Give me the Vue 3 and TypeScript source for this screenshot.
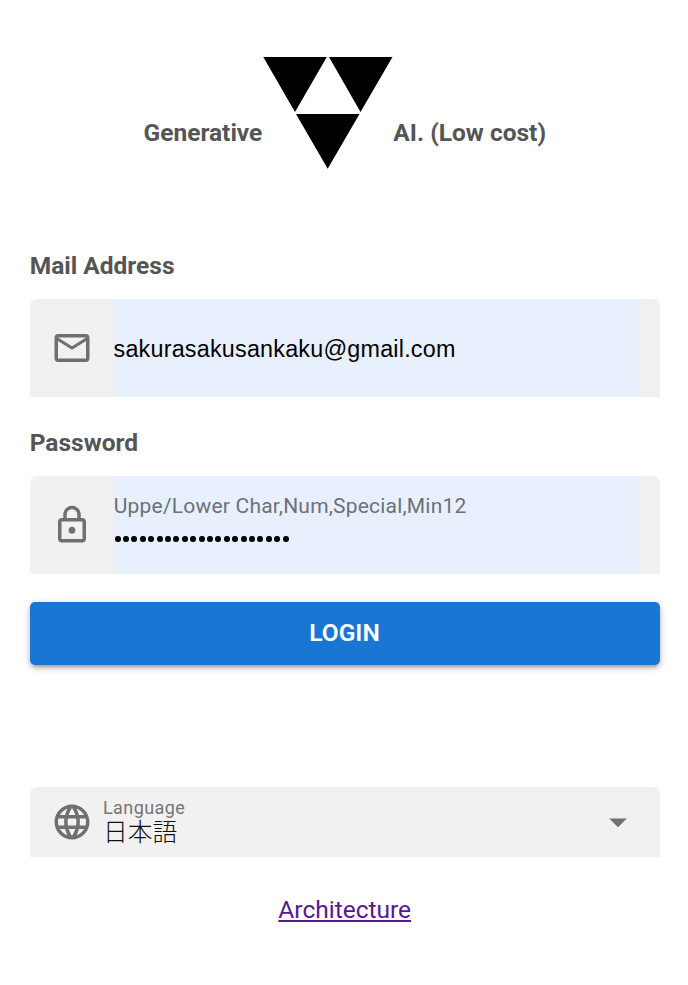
<script setup lang="ts">
import { ref } from 'vue'

const mail = ref<string>('sakurasakusankaku@gmail.com')
const passwordLength = 21
const language = ref<string>('日本語')
</script>

<template>
  <main class="page">
    <header class="brand">
      <span class="brand-text">Generative</span>
      <svg class="logo" viewBox="0 0 131 113" aria-hidden="true">
        <path d="M1.300 1h63.500L33 56ZM67 1h63.500L98.500 56ZM34 58h63.500L65.700 112.800Z" />
      </svg>
      <span class="brand-text">AI. (Low cost)</span>
    </header>

    <h2 class="title">Mail Address</h2>
    <div class="field">
      <svg class="icon" viewBox="0 0 24 24"><path d="M22 6c0-1.100-.9-2-2-2H4c-1.100 0-2 .9-2 2v12c0 1.100.9 2 2 2h16c1.100 0 2-.9 2-2V6zm-2 0l-8 5-8-5h16zm0 12H4V8l8 5 8-5v10z" /></svg>
      <div class="control mail"><span class="mail-value">{{ mail }}</span></div>
    </div>

    <h2 class="title second">Password</h2>
    <div class="field">
      <svg class="icon" viewBox="0 0 24 24"><path d="M18 8h-1V6c0-2.760-2.240-5-5-5S7 3.240 7 6v2H6c-1.100 0-2 .9-2 2v10c0 1.100.9 2 2 2h12c1.100 0 2-.9 2-2V10c0-1.100-.9-2-2-2zM9 6c0-1.660 1.340-3 3-3s3 1.340 3 3v2H9V6zm9 14H6V10h12v10zm-6-3c1.100 0 2-.9 2-2s-.9-2-2-2-2 .9-2 2 .9 2 2 2z" /></svg>
      <div class="control password">
        <span class="hint">Uppe/Lower Char,Num,Special,Min12</span>
        <span class="dots"><i v-for="n in passwordLength" :key="n" class="dot"></i></span>
      </div>
    </div>

    <button class="login" type="button">LOGIN</button>

    <div class="field select">
      <svg class="icon" viewBox="0 0 24 24"><path d="M11.990 2C6.470 2 2 6.480 2 12s4.470 10 9.990 10C17.520 22 22 17.520 22 12S17.520 2 11.990 2zm6.930 6h-2.950c-.32-1.250-.78-2.450-1.380-3.560 1.840.63 3.370 1.910 4.330 3.560zM12 4.040c.83 1.200 1.480 2.530 1.910 3.960h-3.820c.43-1.430 1.080-2.760 1.910-3.960zM4.260 14C4.100 13.360 4 12.690 4 12s.1-1.360.26-2h3.380c-.08.66-.14 1.320-.14 2s.06 1.340.14 2H4.260zm.82 2h2.950c.32 1.250.78 2.450 1.380 3.560-1.840-.63-3.370-1.900-4.330-3.560zm2.950-8H5.080c.96-1.660 2.490-2.930 4.330-3.560C8.810 5.550 8.350 6.750 8.030 8zM12 19.960c-.83-1.200-1.480-2.530-1.910-3.960h3.820c-.43 1.430-1.080 2.760-1.910 3.960zM14.340 14H9.660c-.09-.66-.16-1.320-.16-2s.07-1.350.16-2h4.680c.09.65.16 1.320.16 2s-.07 1.340-.16 2zm.25 5.560c.6-1.110 1.060-2.310 1.380-3.560h2.950c-.96 1.650-2.490 2.930-4.330 3.560zM16.360 14c.08-.66.14-1.320.14-2s-.06-1.340-.14-2h3.380c.16.64.26 1.310.26 2s-.1 1.360-.26 2h-3.380z" /></svg>
      <div class="language">
        <span class="language-label">Language</span>
        <span class="language-value">{{ language }}</span>
      </div>
      <svg class="icon arrow" viewBox="0 0 24 24"><path d="M7 10l5 5 5-5z" /></svg>
    </div>

    <a class="link" href="#">Architecture</a>
  </main>
</template>

<style>
body {
  margin: 0;
  background: #fff;
}
</style>

<style scoped>
.page {
  box-sizing: border-box;
  width: 688px;
  height: 985px;
  padding: 56px 28.5px 0 30px;
  display: flex;
  flex-direction: column;
  font-family: Roboto, "Noto Sans CJK JP", sans-serif;
  font-size: 24.5px;
  color: #000;
  overflow: hidden;
}
.brand {
  display: flex;
  justify-content: center;
  height: 113px;
}
.brand-text {
  padding-top: 58px;
  line-height: 37px;
  font-weight: 700;
  color: #555;
  white-space: nowrap;
}
.logo {
  width: 131px;
  height: 113px;
  flex: none;
}
.title {
  margin: 78px 0 15px -0.3px;
  font-size: 24.5px;
  line-height: 37px;
  font-weight: 700;
  color: #555;
}
.title.second {
  margin-top: 27px;
}
.field {
  box-sizing: border-box;
  width: 630px;
  height: 98px;
  flex: none;
  display: flex;
  align-items: center;
  padding: 0 21px;
  background: #f1f1f1;
  border-radius: 7px 7px 0 0;
}
.icon {
  width: 42px;
  height: 42px;
  flex: none;
  margin-left: -0.5px;
  fill: #707070;
}
.control {
  box-sizing: border-box;
  height: 98px;
  flex: 1;
  margin-left: 21px;
  background: #e8f0fe;
}
.mail {
  display: flex;
  align-items: center;
  padding-top: 3px;
}
.mail-value {
  font-family: "Liberation Sans", Arial, sans-serif;
  font-size: 23.33px;
  letter-spacing: 0.22px;
}
.password {
  display: flex;
  flex-direction: column;
}
.hint {
  margin: 17px 0 0 0.3px;
  line-height: 26px;
  font-size: 21px;
  letter-spacing: 0.2px;
  color: #6d7178;
  white-space: nowrap;
}
.dots {
  display: flex;
  gap: 2.420px;
  margin: 16.500px 0 0 1px;
}
.dot {
  width: 6px;
  height: 6.500px;
  border-radius: 50%;
  background: #000;
}
.login {
  height: 63px;
  flex: none;
  width: 630px;
  margin: 28px 0 122px;
  padding: 0 1px 2px 0;
  border: 0;
  border-radius: 5px;
  background: #1976d2;
  color: #fff;
  font: 600 24.5px Roboto, sans-serif;
  box-shadow: 0 2px 9px rgba(0, 0, 0, 0.2), 0 3px 4px rgba(0, 0, 0, 0.14), 0 5px 2px -3px rgba(0, 0, 0, 0.12);
}
.select {
  height: 70px;
}
.language {
  flex: 1;
  display: flex;
  flex-direction: column;
  margin-left: 10.5px;
}
.language-label {
  font-size: 18px;
  line-height: 20px;
  letter-spacing: 0.4px;
  color: #757575;
}
.language-value {
  margin-bottom: 2px;
  line-height: 24px;
  padding-bottom: 2px;
  font-family: "Noto Sans CJK JP", sans-serif;
  font-size: 24.800px;
  font-weight: 300;
  color: #111;
}
.link {
  align-self: center;
  margin-top: 34px;
  line-height: 37px;
  color: #551a8b;
}
</style>
